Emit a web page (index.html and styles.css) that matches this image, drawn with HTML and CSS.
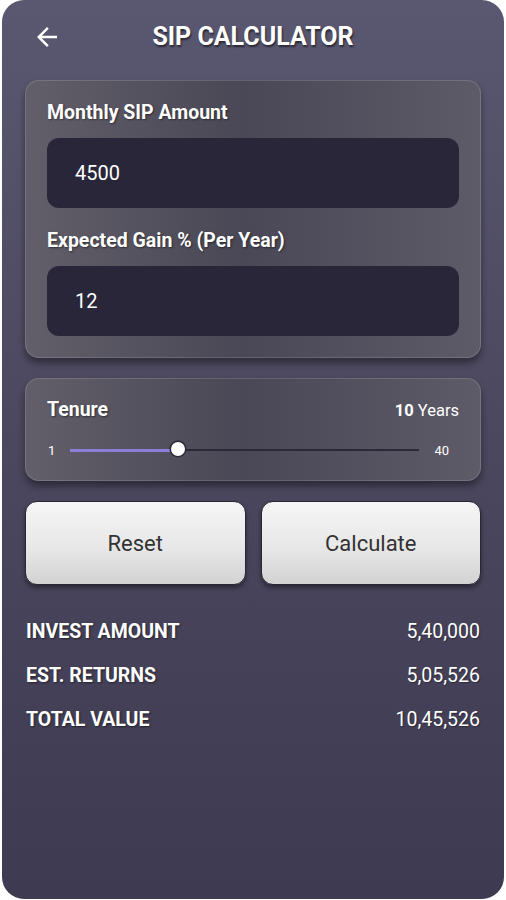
FILE: index.html
```html
<!DOCTYPE html>
<html>
	<head>
		<meta charset="UTF-8">
		<meta name="viewport" content="width=device-width, initial-scale=1.0">
		<title>SIP Calculator</title>
		<link rel="stylesheet" href="styles.css">
	</head>
	<body>
		<div class="phone">
			<div class="header">
				<svg class="back" width="30" height="30" viewBox="0 0 24 24">
					<path d="M20 11H7.83l5.59-5.59L12 4l-8 8 8 8 1.41-1.41L7.83 13H20v-2z" fill="#fff" />
				</svg>
				<h1 class="title">SIP CALCULATOR</h1>
			</div>

			<div class="card inputs">
				<p class="label">Monthly SIP Amount</p>
				<div class="field">4500</div>
				<p class="label second">Expected Gain % (Per Year)</p>
				<div class="field">12</div>
			</div>

			<div class="card tenure">
				<div class="tenure_top">
					<p class="label">Tenure</p>
					<p class="years"><b>10</b> Years</p>
				</div>
				<div class="slider">
					<span class="min">1</span>
					<div class="track">
						<div class="fill" style="width: 31%"></div>
						<div class="thumb" style="left: 31%"></div>
					</div>
					<span class="max">40</span>
				</div>
			</div>

			<div class="buttons">
				<button class="btn">Reset</button>
				<button class="btn">Calculate</button>
			</div>

			<div class="results">
				<div class="row"><span class="name">INVEST AMOUNT</span><span class="val">5,40,000</span></div>
				<div class="row"><span class="name">EST. RETURNS</span><span class="val">5,05,526</span></div>
				<div class="row"><span class="name">TOTAL VALUE</span><span class="val">10,45,526</span></div>
			</div>
		</div>
	</body>
</html>
```

FILE: styles.css
```css
body {
	margin: 0;
	background: #fff;
	font-family: Roboto, "Liberation Sans", sans-serif;
}

.phone {
	width: 502px;
	height: 899px;
	margin-left: 2px;
	box-sizing: border-box;
	padding: 2px 23px 0;
	border-radius: 22px;
	background: linear-gradient(180deg, #5a5870 0%, #4a475e 50%, #3e3a52 100%);
	color: #fff;
}

.header {
	height: 68px;
	display: flex;
	align-items: center;
	position: relative;
}

.back {
	margin-left: 7px;
	margin-top: 1px;
}

.title {
	position: absolute;
	left: 0;
	right: 0;
	margin: 0;
	text-align: center;
	font-size: 25px;
	font-weight: 700;
	text-shadow: 1px 2px 2px rgba(0, 0, 0, 0.55);
	pointer-events: none;
}

.card {
	border-radius: 14px;
	border: 1px solid rgba(255, 255, 255, 0.14);
	background: linear-gradient(90deg, #625f6a 0%, #4a4756 48%, #5d5b68 100%);
	box-shadow: 0 5px 7px rgba(0, 0, 0, 0.4);
	padding: 21px 21px;
}

.inputs {
	margin-top: 10px;
}

.label {
	margin: 0;
	font-size: 19.5px;
	line-height: 22px;
	font-weight: 700;
	text-shadow: 1px 1px 2px rgba(0, 0, 0, 0.5);
}

.label.second {
	margin-top: 22px;
}

.field {
	margin-top: 14px;
	height: 70px;
	border-radius: 12px;
	background: #29263a;
	padding-left: 28px;
	display: flex;
	align-items: center;
	font-size: 20px;
}

.tenure {
	margin-top: 20px;
	padding-top: 20px;
	padding-bottom: 20px;
}

.tenure_top {
	display: flex;
	justify-content: space-between;
	align-items: center;
}

.years {
	margin: 0;
	font-size: 16.5px;
}

.slider {
	margin-top: 19px;
	height: 20px;
	display: flex;
	align-items: center;
	font-size: 13px;
}

.min {
	width: 22px;
	padding-left: 1px;
}

.max {
	width: 40px;
	text-align: right;
	padding-right: 10px;
	box-sizing: border-box;
}

.track {
	flex: 1;
	height: 2px;
	background: #2b2838;
	position: relative;
}

.fill {
	height: 3px;
	margin-top: -0.5px;
	background: #8a7ed8;
}

.thumb {
	position: absolute;
	top: -7px;
	width: 14px;
	height: 14px;
	margin-left: -7px;
	border-radius: 50%;
	background: #fff;
	box-shadow: 0 0 0 1.5px #2a2736;
}

.buttons {
	margin-top: 20px;
	display: flex;
	gap: 15px;
}

.btn {
	flex: 1;
	height: 84px;
	border-radius: 12px;
	border: 1px solid #2a2735;
	background: linear-gradient(180deg, #f6f6f6 0%, #e6e6e6 60%, #d2d2d2 100%);
	box-shadow: 0 3px 4px rgba(0, 0, 0, 0.4);
	font-family: Roboto, "Liberation Sans", sans-serif;
	font-size: 22px;
	color: #333;
	outline: none;
}

.results {
	margin-top: 24px;
	padding: 0 1px 0 1px;
}

.row {
	height: 44px;
	display: flex;
	justify-content: space-between;
	align-items: center;
	font-size: 19.5px;
}

.name {
	font-weight: 700;
	text-shadow: 1px 1px 2px rgba(0, 0, 0, 0.5);
}

.val {
	text-shadow: 1px 1px 1px rgba(0, 0, 0, 0.35);
}
```
